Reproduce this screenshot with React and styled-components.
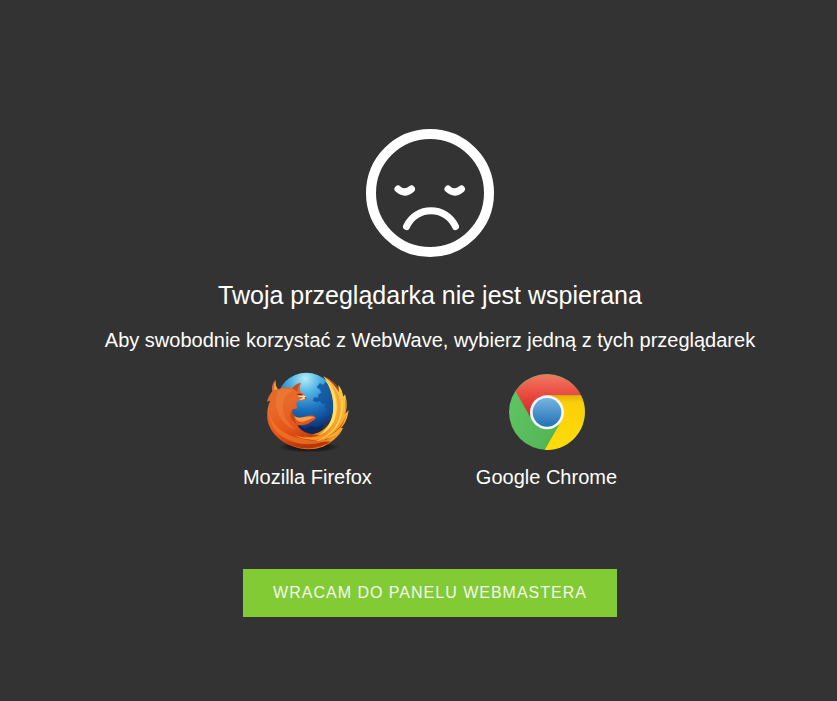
import React from 'react';
import styled, { createGlobalStyle } from 'styled-components';

const GlobalStyle = createGlobalStyle`
  body {
    margin: 0;
    background: #333333;
    font-family: "Liberation Sans", Arial, sans-serif;
    color: #ffffff;
  }
`;

const SadFace = () => (
  <FaceSvg viewBox="0 0 128 128" fill="none" stroke="#fff" strokeLinecap="round" aria-hidden="true">
    <circle cx="64" cy="64" r="59" strokeWidth="10" />
    <path d="M32 60Q38.500 66 45.500 60" strokeWidth="7" />
    <path d="M82 60Q88.500 66 95.500 60" strokeWidth="7" />
    <path d="M40.500 97.500C50 76.500 80 76.500 89.500 97.500" strokeWidth="7" />
  </FaceSvg>
);

const FirefoxLogo = () => (
  <LogoSvg viewBox="15 18 252 252" aria-hidden="true">
    <defs>
      <radialGradient id="ffGlobe" cx="0.48" cy="0.1" r="0.9">
        <stop offset="0" stopColor="#b4ecfa" />
        <stop offset="0.28" stopColor="#4fb3e6" />
        <stop offset="0.6" stopColor="#1b6fbd" />
        <stop offset="1" stopColor="#0a2a6c" />
      </radialGradient>
      <linearGradient id="ffBody" x1="0.1" y1="0" x2="0.5" y2="1">
        <stop offset="0" stopColor="#dd6a2b" />
        <stop offset="0.35" stopColor="#e8692a" />
        <stop offset="0.7" stopColor="#e65519" />
        <stop offset="1" stopColor="#b8350c" />
      </linearGradient>
      <linearGradient id="ffTail" x1="0.8" y1="0" x2="0.3" y2="1">
        <stop offset="0" stopColor="#f9cf50" />
        <stop offset="0.5" stopColor="#f7a829" />
        <stop offset="1" stopColor="#e66a17" />
      </linearGradient>
      <radialGradient id="ffShadow">
        <stop offset="0" stopColor="#111" />
        <stop offset="0.7" stopColor="#1b1b1b" stopOpacity="0.8" />
        <stop offset="1" stopColor="#222" stopOpacity="0" />
      </radialGradient>
    </defs>
    <ellipse cx="146" cy="246" rx="92" ry="17" fill="url(#ffShadow)" />
    <circle cx="139" cy="111" r="88" fill="url(#ffGlobe)" />
    <path d="M170 66l10-12 9 6 7-9 10 8 8 15 6 20 2 28-6 20-10 8-8-7 5-10-10-5 4-12-11 1-7-9-9 4-12-5 5-10 11 1 2-10 8-5-4-9z" fill="#0f5199" opacity="0.8" />
    <path d="M112 177l22 14 20-8 17 5 19-7-10 30-33 13-39-14z" fill="#09235a" opacity="0.7" />
    {/* flames on the right side */}
    <path d="M190 34C211 43 226 55 236 73L235 60C243 69 248 82 250 95L255 88C262 111 261 130 256 147L266 135C263 160 254 178 243 189L249 189C239 213 216 233 189 245C146 261 91 251 58 220L98 206C149 217 184 206 205 179C230 146 223 80 190 34Z" fill="url(#ffTail)" />
    <path d="M194 41C225 72 238 117 226 157C220 181 202 201 177 211C204 191 219 164 220 131C222 93 211 66 194 41Z" fill="#ffdd6a" />
    <path d="M207 48C238 79 246 117 239 151C231 184 211 207 184 221C213 201 231 174 233 140C235 101 225 71 207 48Z" fill="#f3a52e" />
    <path d="M243 87C253 121 248 158 232 183C217 206 193 223 165 230C192 219 214 204 228 181C244 154 247 116 243 87Z" fill="#ffd250" />
    <path d="M256 92C260 114 259 134 252 153C258 133 258 114 256 92ZM190 34C213 43 227 56 236 73L237 82C224 61 211 47 190 34Z" fill="#b7391a" />
    <path d="M260 146C250 176 228 203 198 220L190 228C223 216 249 186 260 146Z" fill="#c64914" />
    <path d="M242 187C222 207 204 218 181 226C204 222 222 214 235 205C217 227 185 242 151 247C196 247 229 223 242 187Z" fill="#f6b038" />
    {/* fox body and arm */}
    <path d="M47 44C45 57 48 66 54 73C69 66 83 65 96 69C103 59 113 54 123 53C119 64 118 74 123 82C130 86 137 90 140 98C138 105 130 106 116 107C109 110 106 117 111 124L112 130L98 133C94 143 98 151 109 156C124 163 142 148 159 152C164 153 167 157 168 160C157 169 145 179 130 180C123 181 116 181 112 179C120 198 145 209 178 210C161 217 145 218 130 214C151 227 180 233 213 229C198 241 166 252 135 250C84 247 39 219 25 175C19 153 21 125 31 107L21 110C24 98 30 87 37 79C34 67 38 53 47 44Z" fill="url(#ffBody)" />
    <path d="M54 78C69 69 87 68 102 79C87 81 78 89 74 101C65 119 68 143 79 163C87 177 97 186 109 194C87 190 65 171 55 147C46 124 44 98 54 78Z" fill="#f08337" opacity="0.5" />
    <path d="M29 144C37 179 65 205 104 216C133 224 164 230 194 228C154 246 99 239 62 211C40 195 28 170 29 144Z" fill="#f57a25" opacity="0.7" />
    <path d="M103 209C132 222 168 221 203 211C177 227 132 229 103 209Z" fill="#f99b2e" />
    <path d="M121 55C109 58 101 64 98 70L112 80C113 68 116 60 121 55Z" fill="#b9501f" />
    <path d="M47 47C42 57 41 69 43 76L53 72C47 64 46 55 47 47Z" fill="#f2a044" />
    <path d="M113 93C122 88 133 90 140 97C136 103 128 104 116 106C124 101 127 99 129 96C123 97 118 96 113 93Z" fill="#f7dfbf" />
    <path d="M110 88C119 85 126 87 129 91C122 92 115 91 110 88ZM135 96L140 98L138 101L134 99Z" fill="#582817" />
    <path d="M98 133C85 145 89 165 112 179C101 160 103 154 109 156C100 151 96 143 98 133Z" fill="#bc4315" opacity="0.8" />
    <path d="M103 153C116 166 142 149 165 157C151 160 138 172 122 170C112 168 105 162 103 153Z" fill="#f8a04a" />
  </LogoSvg>
);

const ChromeLogo = () => (
  <LogoSvg viewBox="12 18 252 252" aria-hidden="true">
    <defs>
      <linearGradient id="crRed" x1="0" y1="0" x2="0" y2="1">
        <stop offset="0" stopColor="#f37860" />
        <stop offset="0.55" stopColor="#e6443a" />
        <stop offset="1" stopColor="#c92c29" />
      </linearGradient>
      <linearGradient id="crGreen" x1="0" y1="0.2" x2="1" y2="0.8">
        <stop offset="0" stopColor="#5fc565" />
        <stop offset="0.65" stopColor="#56b758" />
        <stop offset="1" stopColor="#40a047" />
      </linearGradient>
      <linearGradient id="crYellow" x1="0" y1="0" x2="0" y2="1">
        <stop offset="0" stopColor="#e6b008" />
        <stop offset="0.14" stopColor="#fbcf07" />
        <stop offset="1" stopColor="#ffdc09" />
      </linearGradient>
      <linearGradient id="crBlue" x1="0" y1="0" x2="0" y2="1">
        <stop offset="0" stopColor="#75b4df" />
        <stop offset="1" stopColor="#2371b7" />
      </linearGradient>
    </defs>
    <circle cx="141" cy="141" r="114" fill="url(#crGreen)" />
    <path d="M47 79A114 114 0 0 1 243 91L141 91L90 155Z" fill="url(#crRed)" />
    <path d="M243 91A114 114 0 0 1 134 255L184 168L141 91Z" fill="url(#crYellow)" />
    <circle cx="141" cy="142" r="51" fill="#f5f7f8" />
    <circle cx="141" cy="142" r="43" fill="url(#crBlue)" />
  </LogoSvg>
);

const App = () => {
  return (
    <>
      <GlobalStyle />
      <Page>
        <SadFace />
        <Title>Twoja przeglądarka nie jest wspierana</Title>
        <Subtitle>Aby swobodnie korzystać z WebWave, wybierz jedną z tych przeglądarek</Subtitle>
        <Browsers>
          <BrowserLink href="#firefox">
            <FirefoxLogo />
            Mozilla Firefox
          </BrowserLink>
          <BrowserLink href="#chrome">
            <ChromeLogo />
            Google Chrome
          </BrowserLink>
        </Browsers>
        <BackButton type="button">WRACAM DO PANELU WEBMASTERA</BackButton>
      </Page>
    </>
  );
};

const Page = styled.main`
  display: flex;
  flex-direction: column;
  align-items: center;
  box-sizing: border-box;
  min-height: 100vh;
  padding: 129px 0 48px 23px;
  text-align: center;
`;

const FaceSvg = styled.svg`
  width: 128px;
  height: 128px;
`;

const Title = styled.h1`
  margin: 22px 0 0;
  font-size: 25px;
  line-height: 32px;
  font-weight: 400;
`;

const Subtitle = styled.p`
  margin: 17px 0 0;
  font-size: 20px;
  line-height: 24px;
`;

const Browsers = styled.div`
  display: flex;
  gap: 104px;
  margin-top: 19px;
`;

const BrowserLink = styled.a`
  display: flex;
  flex-direction: column;
  align-items: center;
  gap: 10px;
  font-size: 20px;
  line-height: 24px;
  color: inherit;
  text-decoration: none;
`;

const LogoSvg = styled.svg`
  width: 84px;
  height: 84px;
`;

const BackButton = styled.button`
  margin-top: 80px;
  padding: 0 30px;
  height: 48px;
  border: none;
  background: #82cb35;
  color: #f3f8ec;
  font-family: inherit;
  font-size: 16px;
  letter-spacing: 1px;
  cursor: pointer;

  &:hover {
    background: #76ba2e;
  }
`;

export default App;
